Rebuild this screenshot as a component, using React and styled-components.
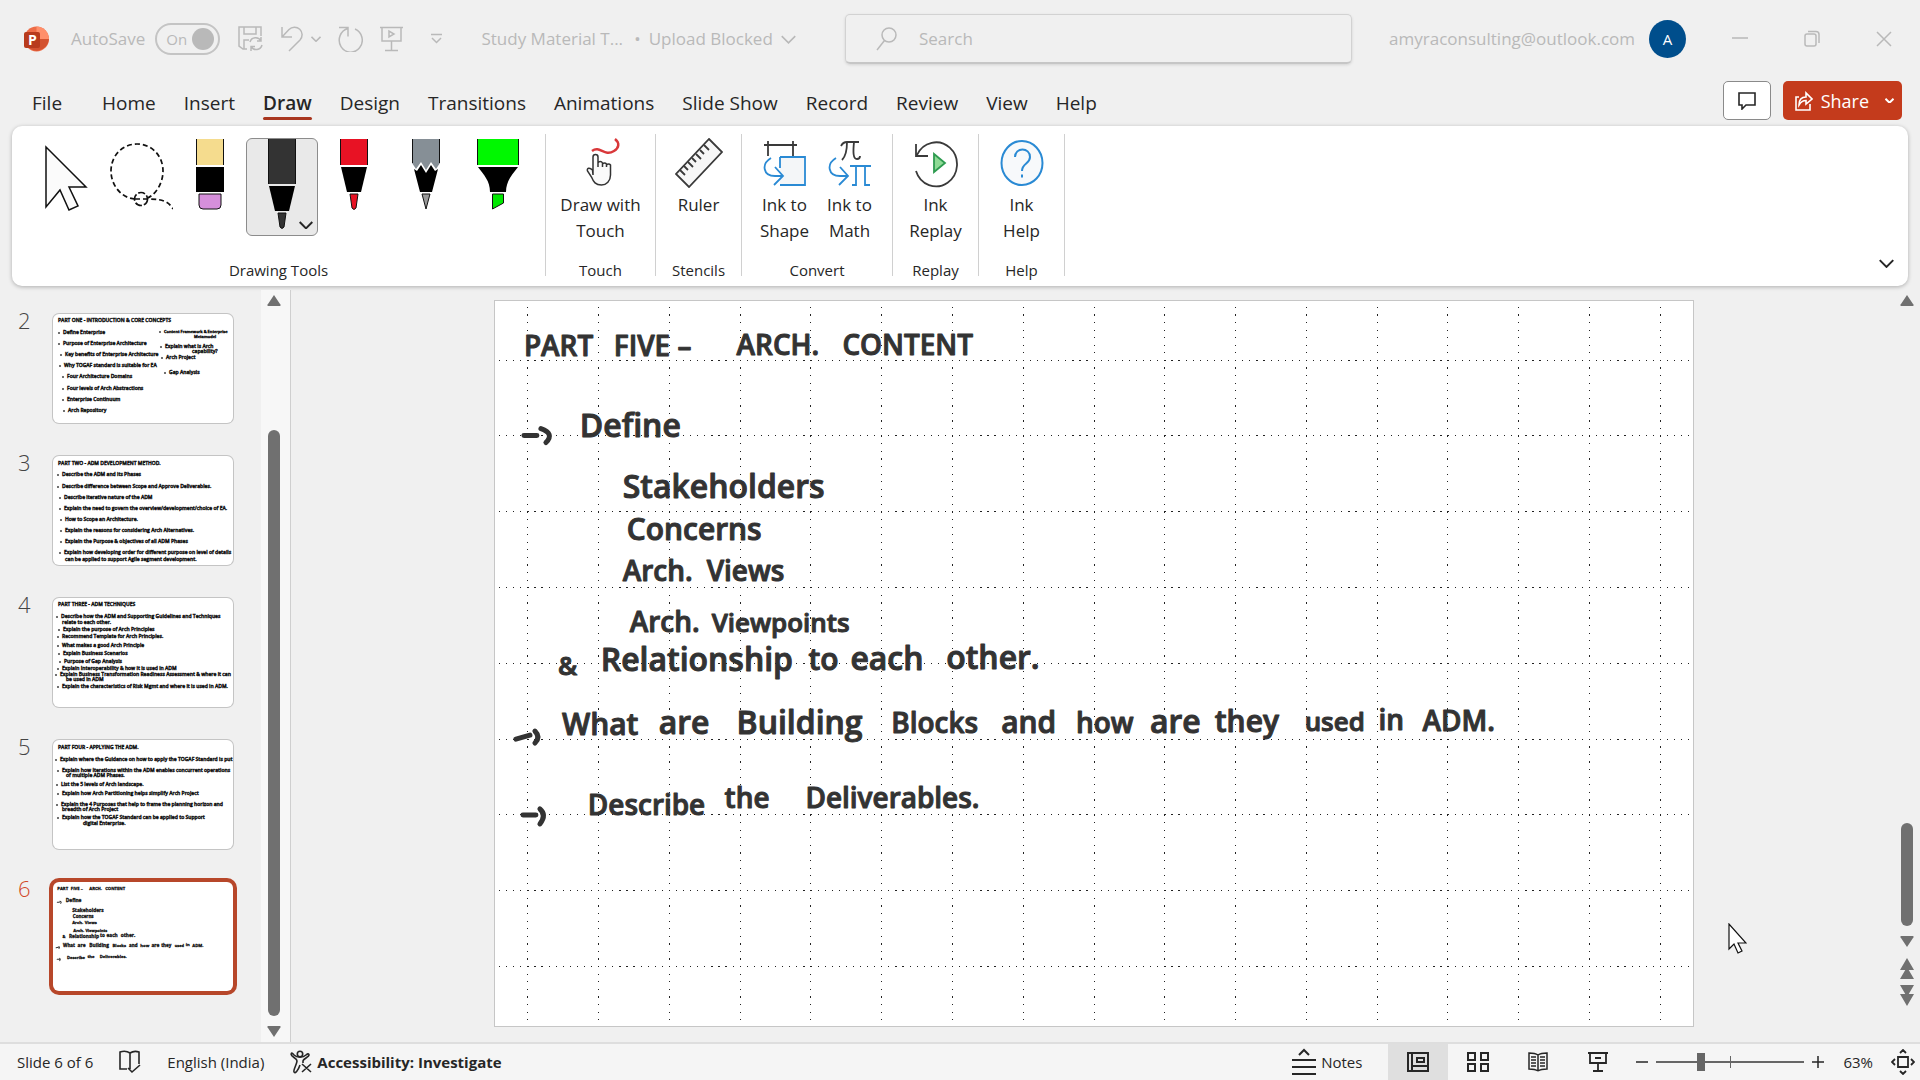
import React from "react";
import styled, { createGlobalStyle } from "styled-components";

const Global = createGlobalStyle`
  *, *::before, *::after { box-sizing: border-box; }
  body {
    margin: 0;
    background: #f0f0f0;
    color: #262626;
    font-family: "Open Sans", "Noto Sans", sans-serif;
    font-size: 17px;
    line-height: 26px;
  }
  button { font: inherit; color: inherit; background: none; border: 0; padding: 0; }
  svg { display: block; flex: none; }
`;

/* ---------- window frame ---------- */

const Window = styled.div`
  display: flex;
  flex-direction: column;
  height: 100vh;
  overflow: hidden;
`;

const TitleBar = styled.header`
  display: grid;
  grid-template-columns: 845fr 507fr 568fr;
  align-items: center;
  height: 78px;
  color: #b9b9b9;
  white-space: nowrap;
`;

const TitleLeft = styled.div`
  display: flex;
  align-items: center;
  padding-left: 24px;
`;

const TitleRight = styled.div`
  display: flex;
  align-items: center;
  justify-content: flex-end;
  padding-right: 28px;
`;

const AutoSave = styled.label`
  display: flex;
  align-items: center;
  gap: 10px;
  margin: 0 18px 0 22px;
`;

const HiddenCheck = styled.input`
  position: absolute;
  opacity: 0;
  pointer-events: none;
`;

const Switch = styled.span`
  display: flex;
  align-items: center;
  justify-content: space-between;
  width: 65px;
  height: 32px;
  padding: 0 4px 0 9px;
  border: 2px solid #c4c4c4;
  border-radius: 16px;
  font-size: 15px;
`;

const Knob = styled.span`
  width: 22px;
  height: 22px;
  border-radius: 50%;
  background: #b9b9b9;
`;

const QuickTools = styled.div`
  display: flex;
  align-items: center;
  gap: 17px;
`;

const UndoGroup = styled.div`
  display: flex;
  align-items: center;
  gap: 8px;
`;

const MoreButton = styled.button`
  margin-left: 28px;
`;

const DocName = styled.button`
  display: flex;
  align-items: center;
  gap: 8px;
  margin-left: 36px;
`;

const DocTitle = styled.span`
  width: 148px;
`;

const SearchBox = styled.label`
  display: flex;
  align-items: center;
  gap: 20px;
  height: 50px;
  padding-left: 30px;
  border: 1px solid #d2d2d2;
  border-bottom: 2px solid #c6c6c6;
  border-radius: 5px;
  box-shadow: 0 1px 3px rgba(0, 0, 0, 0.12);
`;

const SearchInput = styled.input`
  flex: 1;
  min-width: 0;
  border: 0;
  outline: 0;
  background: none;
  font: inherit;
  &::placeholder { color: #b9b9b9; opacity: 1; }
`;

const Avatar = styled.span`
  display: grid;
  place-items: center;
  width: 37px;
  height: 38px;
  margin: 0 46px 0 14px;
  border-radius: 50%;
  background: #004e8c;
  color: #fff;
  font-size: 15px;
`;

const WindowButtons = styled.div`
  display: flex;
  gap: 56px;
`;

/* ---------- tab strip ---------- */

const TabBar = styled.nav`
  display: flex;
  align-items: flex-start;
  justify-content: space-between;
  height: 48px;
  padding: 3px 18px 0;
`;

const TabList = styled.div`
  display: flex;
  font-size: 19px;
`;

const Tab = styled.button`
  margin-right: ${(p) => (p.$first ? "12px" : "0")};
  padding: 8px 14px 0;
  font-weight: ${(p) => (p.$active ? 600 : 400)};
  line-height: 28px;
  white-space: nowrap;
  &::after {
    content: "";
    display: block;
    height: 3px;
    border-radius: 2px;
    background: ${(p) => (p.$active ? "#a8361f" : "transparent")};
  }
`;

const TabActions = styled.div`
  display: flex;
  gap: 12px;
`;

const CommentButton = styled.button`
  display: grid;
  place-items: center;
  width: 48px;
  height: 39px;
  border: 1px solid #8a8a8a;
  border-radius: 5px;
  background: #fff;
`;

const ShareButton = styled.button`
  display: flex;
  align-items: center;
  gap: 8px;
  height: 39px;
  padding: 0 8px 0 12px;
  border-radius: 5px;
  background: #c43b1c;
  color: #fff;
  font-size: 18px;
`;

const ShareText = styled.span`
  margin-right: 8px;
`;

/* ---------- ribbon ---------- */

const Ribbon = styled.section`
  display: flex;
  margin: 0 12px;
  height: 160px;
  padding: 8px 0 10px;
  border-radius: 10px;
  background: #fff;
  box-shadow: 0 1px 4px rgba(0, 0, 0, 0.28);
`;

const Group = styled.div`
  display: flex;
  flex-direction: column;
  align-items: center;
  justify-content: space-between;
  width: ${(p) => p.$width}px;
  padding: 4px 0 1px;
  border-right: 1px solid #d0d0d0;
`;

const GroupItems = styled.div`
  display: flex;
  padding-left: ${(p) => (p.$inset ? "6px" : "0")};
`;

const GroupLabel = styled.span`
  font-size: 15px;
  line-height: 10px;
`;

const RibbonButton = styled.button`
  display: flex;
  flex-direction: column;
  align-items: center;
  width: ${(p) => p.$width}px;
  line-height: 26px;
  svg { margin-bottom: 4px; }
`;

const Tool = styled.button`
  position: relative;
  display: flex;
  justify-content: center;
  width: 72px;
  height: 98px;
  border-radius: 6px;
  border: 1px solid ${(p) => (p.$active ? "#8c8c8c" : "transparent")};
  background: ${(p) => (p.$active ? "#e9e9e9" : "transparent")};
`;

const ToolArrow = styled.span`
  position: absolute;
  right: 4px;
  bottom: 6px;
`;

const Collapse = styled.button`
  margin-left: auto;
  align-self: flex-end;
  padding: 0 14px 8px;
`;

/* ---------- workspace ---------- */

const Workspace = styled.main`
  flex: 1;
  display: grid;
  grid-template-columns: 261px 30px 1fr 26px;
  min-height: 0;
  padding-top: 4px;
  border-bottom: 2px solid #dedede;
`;

const ThumbList = styled.div`
  display: flex;
  flex-direction: column;
  gap: 33px;
  padding: 24px 0 0 18px;
`;

const ThumbRow = styled.button`
  display: flex;
  align-items: flex-start;
  text-align: left;
  color: ${(p) => (p.$active ? "#d24726" : "#444")};
`;

const ThumbNumber = styled.span`
  width: 35px;
  font-size: 22px;
  font-weight: 300;
  line-height: 12px;
`;

const ThumbFrame = styled.span`
  width: 180px;
  height: 109px;
  overflow: hidden;
  border-radius: 6px;
  background: #fff;
  box-shadow: 0 0 0 ${(p) => (p.$active ? "4px #b7472a" : "1px #c4c4c4")};
`;

const ScrollTrack = styled.div`
  display: flex;
  flex-direction: column;
  align-items: center;
  padding: ${(p) => (p.$divided ? "5px 3px 5px 0" : "5px 0 8px")};
  background: ${(p) => (p.$divided ? "#f7f7f7" : "transparent")};
  border-right: ${(p) => (p.$divided ? "1px solid #cfcfcf" : "0")};
`;

const ScrollThumb = styled.div`
  width: 12px;
  flex: 0 0 ${(p) => p.$size}%;
  margin: auto 0 10px;
  border-radius: 6px;
  background: #707070;
`;

const PageJumps = styled.div`
  display: flex;
  flex-direction: column;
  gap: 6px;
  padding: 11px 0 28px;
`;

const Canvas = styled.div`
  position: relative;
  padding: 10px 0 0 3px;
`;

const Slide = styled.div`
  width: 75%;
  margin: 0 auto;
  border: 1px solid #c6c6c6;
  background: #fff;
  svg { width: 100%; height: auto; }
`;

const Pointer = styled.div`
  position: absolute;
  left: 1437px;
  top: 633px;
`;

/* ---------- status bar ---------- */

const StatusBar = styled.footer`
  display: flex;
  align-items: center;
  justify-content: space-between;
  height: 36px;
  padding: 0 5px 0 17px;
  background: #f5f5f5;
  font-size: 15px;
  white-space: nowrap;
`;

const StatusSide = styled.div`
  display: flex;
  align-items: center;
  gap: ${(p) => p.$gap}px;
  height: 100%;
`;

const StatusButton = styled.button`
  display: flex;
  align-items: center;
  gap: 5px;
  font-weight: ${(p) => (p.$bold ? 700 : 400)};
`;

const NotesButton = styled(StatusButton)`
  margin-right: 26px;
`;

const ViewButton = styled.button`
  display: grid;
  place-items: center;
  width: 60px;
  height: 36px;
  background: ${(p) => (p.$active ? "#dfdfdf" : "transparent")};
`;

const ZoomGroup = styled.div`
  display: flex;
  align-items: center;
  gap: 8px;
  padding: 0 19px 0 8px;
`;

const ZoomRange = styled.input`
  appearance: none;
  width: 148px;
  height: 26px;
  margin: 0;
  background:
    linear-gradient(#666, #666) 50% 50% / 1px 12px no-repeat,
    linear-gradient(#666, #666) 0 50% / 100% 2px no-repeat;
  &::-webkit-slider-thumb {
    appearance: none;
    width: 8px;
    height: 18px;
    background: #666;
  }
`;

/* ---------- icons ---------- */

const Svg = ({ w, h, vb, children, stroke = "currentColor", sw = 1.5 }) => (
  <svg width={w} height={h} viewBox={vb || `0 0 ${w} ${h}`} fill="none" stroke={stroke} strokeWidth={sw} aria-hidden="true">
    {children}
  </svg>
);

const Chevron = ({ w = 12, sw = 1.6 }) => (
  <Svg w={w} h={w * 0.6} vb="0 0 20 12" sw={(sw * 20) / w}><path d="M1 1.5 10 10.5 19 1.5" /></Svg>
);

const Logo = () => (
  <svg width="25" height="26" viewBox="0 0 25 26" aria-hidden="true">
    <circle cx="12.5" cy="13" r="12.5" fill="#ed6c47" />
    <path d="M12.5.5A12.5 12.5 0 0 1 25 13H12.5z" fill="#ff8f6b" />
    <path d="M0 13h25a12.5 12.5 0 0 1-24 4z" fill="#d35230" />
    <rect y="6" width="16" height="16" rx="2" fill="#b83b1d" />
    <text x="4" y="19" fill="#fff" fontSize="14" fontWeight="700">P</text>
  </svg>
);

const SaveIcon = () => (
  <Svg w={25} h={26}>
    <path d="M9 23H5L1 20V1h22v9M6 1v7h12V1M6 23v-9h5" />
    <path d="M12 16a6 6 0 0 1 11-1M23 11v4h-4M24 19a6 6 0 0 1-11 1.5M13 25v-4.5h4" />
  </Svg>
);
const UndoIcon = () => (
  <Svg w={23} h={26}><path d="M2 1v10h10M2 11 9 3.5a7.5 7.5 0 0 1 11 10.5L9 25" /></Svg>
);
const RedoIcon = () => (
  <Svg w={25} h={26}><path d="M1 1.5h9v9M10 2.5A11.5 12 0 1 0 17 3" /></Svg>
);
const PresentIcon = () => (
  <Svg w={23} h={26}><path d="M0 1.5h23M2 1.5V15h19V1.5M11.5 15v9M5 24.5h13" /><path d="M9 5v6l5-3z" /></Svg>
);
const MoreIcon = () => (
  <Svg w={11} h={12}><path d="M0 1.5h11M1 5l4.5 4.5L10 5" /></Svg>
);
const SearchIcon = () => (
  <Svg w={21} h={24}><circle cx="13" cy="8" r="7" /><path d="M8.5 13.5 1 23" /></Svg>
);
const MinIcon = () => <Svg w={16} h={18}><path d="M0 8h16" /></Svg>;
const RestoreIcon = () => (
  <Svg w={16} h={18}><rect x="1" y="4" width="11" height="12" rx="2" /><path d="M4 1.5h8a3 3 0 0 1 3 3V13" /></Svg>
);
const CloseIcon = () => <Svg w={16} h={18}><path d="M1 2l14 14M15 2 1 16" /></Svg>;
const CommentIcon = () => (
  <Svg w={18} h={18} sw={1.6}><path d="M1 1h16v12H8l-4 4v-4H1z" /></Svg>
);
const ShareIcon = () => (
  <Svg w={18} h={20} sw={1.6}><path d="M4 6H1v13h14v-6" /><path d="M4 14c0-6 3-8 7-8V2l6 6-6 5V9.5c-3 0-5 1-7 4.5z" /></Svg>
);

const SelectIcon = () => (
  <svg width="70" height="80" viewBox="0 0 70 80" aria-hidden="true">
    <path d="M15 8v60l14-17 9 20 9-4-9-19h17z" fill="#fbfbfb" stroke="#111" strokeWidth="1.5" />
  </svg>
);
const LassoIcon = () => (
  <Svg w={70} h={80} stroke="#111" sw={1.7}>
    <path d="M32 60C18 59 8 46 8 32 8 17 19 5 34 5s26 12 26 27c0 13-8 25-18 28" strokeDasharray="5 3" />
    <path d="M32 60h14c14 0 20 3 24 10" strokeDasharray="5 3" />
    <circle cx="38" cy="60" r="6.5" strokeDasharray="7 2" />
  </Svg>
);
const EraserIcon = () => (
  <svg width="28" height="72" viewBox="0 0 28 72" aria-hidden="true">
    <rect width="28" height="26" fill="#f5dc8e" />
    <path d="M.5 0v26M27.5 0v26" stroke="#111" />
    <rect y="28" width="28" height="25" />
    <path d="M3 55h22v11a4 4 0 0 1-4 4H7a4 4 0 0 1-4-4z" fill="#d68fdb" stroke="#111" />
  </svg>
);
const PenIcon = ({ color, long }) => {
  const b = long ? 45 : 26;
  return (
    <svg width="28" height={b + 46} viewBox={`0 0 28 ${b + 46}`} aria-hidden="true">
      <rect width="28" height={b} fill={color} />
      <path d={`M.5 0v${b}M27.5 0v${b}`} stroke="#111" />
      <path d={`M1 ${b + 2}h26l-6 25H7z`} />
      <path d={`M10 ${b + 29}h8l-2 14q-2 3-4 0z`} fill={color} stroke="#111" />
    </svg>
  );
};
const PencilIcon = () => (
  <svg width="28" height="72" viewBox="0 0 28 72" aria-hidden="true">
    <path d="M0 0h28v24l-4 6-5-7-5 8-5-8-5 7-4-6z" fill="#868f96" />
    <path d="M.5 0v24M27.5 0v24" stroke="#111" />
    <path d="M2 30l3 2 4-6 5 8 5-8 4 6 3-2-6 23H8z" />
    <path d="M10 55h8l-4 15z" fill="#999" stroke="#111" />
  </svg>
);
const HighlighterIcon = () => (
  <svg width="42" height="72" viewBox="0 0 42 72" aria-hidden="true">
    <rect width="42" height="26" fill="#00f800" />
    <path d="M.5 0v26M41.5 0v26" stroke="#111" />
    <path d="M1 28h40c-6 8-12 14-12 25H13C13 42 7 36 1 28z" />
    <path d="M15.5 55h11v9l-11 6z" fill="#00e800" stroke="#111" />
  </svg>
);

const TouchIcon = () => (
  <Svg w={40} h={50}>
    <path d="M11 13c8-6 12 6 22 0 5-3 6-8 1-12" stroke="#d9383a" strokeWidth="2.5" />
    <path d="M12 37V19a2.500 2.500 0 0 1 5 0v10-4a2.500 2.500 0 0 1 4.500 0v4-3a2.500 2.500 0 0 1 4 0v3-2a2.500 2.500 0 0 1 4 0v10c0 6-4 10-9 10-6 0-8-3-10-8l-4-6c-1-3 2-4 5-1z" fill="#fafafa" stroke="#333" />
  </Svg>
);
const RulerIcon = () => (
  <Svg w={48} h={50} stroke="#3a3a3a" sw={1.8}>
    <path d="M34 1 47 14 14 49 1 36z" fill="#f7f7f7" />
    <path d="M5 32l5 5M9 28l4 4M13 24l5 5M17 20l4 4M21 16l5 5M25 12l4 4M29 7l5 5" />
  </Svg>
);
const ShapeIcon = () => (
  <Svg w={44} h={50} sw={1.8}>
    <path d="M1 7h33M5 3v15M30 3v15" stroke="#3a3a3a" />
    <path d="M17 19h25v28H17" fill="#f4f6f8" stroke="#2a8ad4" />
    <path d="M17 30v-11M8 20C-2 26 0 38 12 38h7M12 29l8 9-9 9" stroke="#2a8ad4" />
  </Svg>
);
const MathIcon = () => (
  <Svg w={44} h={50} sw={1.8}>
    <path d="M13 8c2-4 4-4 6-4h12M19 4c0 8-1 14-5 18M26 4c-1 10-1 17 3 17 2 0 3-1 3-3" stroke="#3a3a3a" />
    <path d="M8 20C-2 26 0 38 12 38h7M12 29l8 9-9 9" stroke="#2a8ad4" />
    <path d="M22 28h21M28 28v19h-4M37 28v19h5" stroke="#2a8ad4" />
  </Svg>
);
const ReplayIcon = () => (
  <Svg w={44} h={50} sw={1.8}>
    <path d="M2 6v12h12M3 17A21 22 0 1 1 2 33" stroke="#3a3a3a" />
    <path d="M20 16v18l11-9z" fill="#8fdb96" stroke="#2e9b50" />
  </Svg>
);
const HelpIcon = () => (
  <Svg w={44} h={50} stroke="#2a8ad4" sw={2}>
    <ellipse cx="22" cy="25" rx="20.5" ry="22" fill="#f7f9fb" />
    <path d="M15 19c0-10 15-10 15 0 0 7-8 6-8 14M22 36.5v3" />
  </Svg>
);

const ArrowUp = () => <svg width="14" height="11" viewBox="0 0 14 11" aria-hidden="true"><path d="M7 0l6 9a1 1 0 0 1-1 2H2a1 1 0 0 1-1-2z" fill="#707070" /></svg>;
const ArrowDown = () => <svg width="14" height="11" viewBox="0 0 14 11" aria-hidden="true"><path d="M7 11l6-9a1 1 0 0 0-1-2H2a1 1 0 0 0-1 2z" fill="#707070" /></svg>;
const DoubleUp = () => <svg width="14" height="21" viewBox="0 0 14 21" aria-hidden="true"><path d="M7 0l7 12H0zM7 9l7 12H0z" fill="#707070" /></svg>;
const DoubleDown = () => <svg width="14" height="21" viewBox="0 0 14 21" aria-hidden="true"><path d="M7 21l7-12H0zM7 12l7-12H0z" fill="#707070" /></svg>;

const SpellIcon = () => (
  <Svg w={22} h={24} sw={1.6}><path d="M11 19V3C8 1 4 1 1 2v17h7M11 3c3-2 6-2 9-1v12M9 18l4 4 8-7" /></Svg>
);
const AccessIcon = () => (
  <Svg w={22} h={24} sw={1.6}>
    <circle cx="10" cy="4" r="2.7" />
    <path d="M1 4c1-2 2 0 3 1 3 3 9 3 12 0 1-1 3-2 3 0s-6 4-6 6v2M1 4c0 3 6 4 6 7s-4 9-3 11 4-1 6-7M12 14l9 8M21 14l-9 8" />
  </Svg>
);
const NotesIcon = () => (
  <Svg w={24} h={28} sw={2}><path d="M7 7l5-5 5 5M0 12h24M0 19h24M0 26h24" /></Svg>
);
const NormalIcon = () => (
  <Svg w={22} h={20} sw={2}><path d="M1 1h20v18H1zM5 1v18M5 14h16M10 6h7v4h-7z" /></Svg>
);
const SorterIcon = () => (
  <Svg w={22} h={20} sw={2}><path d="M1 1h7v7H1zM14 1h7v7h-7zM1 12h7v7H1zM14 12h7v7h-7z" /></Svg>
);
const ReadingIcon = () => (
  <Svg w={22} h={20}><path d="M11 3v16M11 3C8 1 4 1 2 1v16c3 0 6 0 9 2M11 3c3-2 7-2 9-2v16c-3 0-6 0-9 2M4 5h5M4 8h5M4 11h5M4 14h5M13 5h5M13 8h5M13 11h5M13 14h5" /></Svg>
);
const ShowIcon = () => (
  <Svg w={22} h={20} sw={1.8}><path d="M1 1h20M3 1v10h16V1M8 6h6M11 11v8M6 19h10" /></Svg>
);
const FitIcon = () => (
  <Svg w={24} h={26} sw={1.8}><path d="M7 8h10v10H7zM9 4l3-3 3 3M9 22l3 3 3-3M4 10l-3 3 3 3M20 10l3 3-3 3" /></Svg>
);
const MinusIcon = () => <Svg w={12} h={12}><path d="M0 6h12" /></Svg>;
const PlusIcon = () => <Svg w={12} h={12}><path d="M0 6h12M6 0v12" /></Svg>;

/* ---------- slide contents ---------- */

const Handwriting = styled.g`
  font-family: "Open Sans", "Noto Sans", sans-serif;
  font-weight: ${(p) => (p.$heavy ? 700 : 600)};
  fill: ${(p) => (p.$heavy ? "#111" : "#333")};
  stroke: ${(p) => (p.$heavy ? "#111" : "#333")};
  stroke-width: ${(p) => (p.$heavy ? 2 : 1)}px;
  stroke-linejoin: round;
`;

/* x, baseline, size, word */
const words = [
  [30, 54, 28, "PART"], [120, 54, 28, "FIVE –"], [243, 53, 28, "ARCH."], [349, 53, 28, "CONTENT"],
  [86, 135, 32, "Define"],
  [129, 196, 32, "Stakeholders"],
  [133, 239, 30, "Concerns"],
  [129, 280, 28, "Arch."], [213, 280, 28, "Views"],
  [136, 331, 28, "Arch."], [218, 331, 26, "Viewpoints"],
  [64, 374, 26, "&"], [107, 370, 32, "Relationship"], [315, 369, 30, "to"], [357, 369, 32, "each"], [453, 368, 32, "other."],
  [68, 434, 30, "What"], [165, 433, 32, "are"], [243, 433, 32, "Building"], [398, 432, 28, "Blocks"], [508, 432, 30, "and"],
  [583, 432, 28, "how"], [657, 432, 32, "are"], [722, 431, 30, "they"], [812, 430, 26, "used"], [886, 429, 28, "in"], [930, 430, 28, "ADM."],
  [94, 514, 28, "Describe"], [231, 507, 28, "the"], [312, 507, 28, "Deliverables."],
];

const verticals = Array.from({ length: 17 }, (_, i) => 601 + (i - 8) * 70.9);
const horizontals = Array.from({ length: 9 }, (_, i) => 362 + (i - 4) * 75.9);

const PartFive = ({ grid }) => (
  <svg width="180" height="109" viewBox="1 1 1200 723">
    {grid && (
      <g stroke="#222" strokeWidth="1" shapeRendering="crispEdges">
        {verticals.map((x) => <path key={x} d={`M${x} 5V724`} strokeDasharray="1.2 6.39" />)}
        {horizontals.map((y) => <path key={y} d={`M5 ${y}H1200`} strokeDasharray="1.2 5.89" />)}
      </g>
    )}
    <Handwriting $heavy={!grid}>
      {words.map(([x, y, size, text]) => <text key={`${x}-${y}`} x={x} y={y} fontSize={size}>{text}</text>)}
    </Handwriting>
    <g fill="none" stroke="#333" strokeWidth={grid ? 5 : 7} strokeLinecap="round">
      <path d="M30 134H43M47 127q14 5 5 14" />
      <path d="M22 438l14-4M41 430q6 6 0 12" />
      <path d="M29 514h13M46 508q7 6 0 15" />
    </g>
  </svg>
);

/* x, baseline, text, bulleted, small */
const notes = {
  2: [
    [5, 8, "PART ONE - INTRODUCTION & CORE CONCEPTS"],
    [10, 20, "Define Enterprise", true], [10, 31, "Purpose of Enterprise Architecture", true],
    [12, 42, "Key benefits of Enterprise Architecture", true], [11, 53, "Why TOGAF standard is suitable for EA", true],
    [14, 64, "Four Architecture Domains", true], [14, 76, "Four levels of Arch Abstractions", true],
    [14, 87, "Enterprise Continuum", true], [15, 98, "Arch Repository", true],
    [111, 19, "Content Framework & Enterprise", true, true], [141, 24, "Metamodel", false, true],
    [112, 34, "Explain what is Arch", true], [139, 39, "capability?"],
    [113, 45, "Arch Project", true], [116, 60, "Gap Analysis", true],
  ],
  3: [
    [5, 9, "PART TWO - ADM DEVELOPMENT METHOD."],
    [9, 20, "Describe the ADM and its Phases", true], [9, 32, "Describe difference between Scope and Approve Deliverables.", true],
    [11, 43, "Describe iterative nature of the ADM", true], [11, 54, "Explain the need to govern the overview/development/choice of EA.", true],
    [12, 65, "How to Scope an Architecture.", true], [12, 76, "Explain the reasons for considering Arch Alternatives.", true],
    [12, 87, "Explain the Purpose & objectives of all ADM Phases", true],
    [11, 98, "Explain how developing order for different purpose on level of details", true],
    [12, 105, "can be applied to support Agile segment development."],
  ],
  4: [
    [5, 8, "PART THREE - ADM TECHNIQUES"],
    [8, 20, "Describe how the ADM and Supporting Guidelines and Techniques", true], [9, 26, "relate to each other."],
    [10, 33, "Explain the purpose of Arch Principles", true], [9, 40, "Recommend Template for Arch Principles.", true],
    [9, 49, "What makes a good Arch Principle", true], [10, 57, "Explain Business Scenarios", true],
    [11, 65, "Purpose of Gap Analysis", true], [9, 72, "Explain Interoperability & how it is used in ADM", true],
    [7, 78, "Explain Business Transformation Readiness Assessment & where it can", true], [13, 83, "be used in ADM"],
    [9, 90, "Explain the characteristics of Risk Mgmt and where it is used in ADM.", true],
  ],
  5: [
    [5, 9, "PART FOUR - APPLYING THE ADM."],
    [7, 21, "Explain where the Guidance on how to apply the TOGAF Standard is put", true],
    [9, 32, "Explain how Iterations within the ADM enables concurrent operations", true], [13, 37, "of multiple ADM Phases."],
    [8, 46, "List the 5 levels of Arch landscape.", true], [9, 55, "Explain how Arch Partitioning helps simplify Arch Project", true],
    [8, 66, "Explain the 4 Purposes that help to frame the planning horizon and", true], [9, 71, "breadth of Arch Project"],
    [9, 79, "Explain how the TOGAF Standard can be applied to Support", true], [30, 85, "digital Enterprise."],
  ],
};

const ThumbInk = styled.g`
  font-family: "Open Sans", "Noto Sans", sans-serif;
  font-weight: 600;
  fill: #111;
  stroke: #111;
  stroke-width: 0.4px;
`;

const NotesSlide = ({ lines }) => (
  <svg width="180" height="109" viewBox="0 0 180 109">
    <ThumbInk>
      {lines.map(([x, y, text, bulleted, small]) => (
        <React.Fragment key={text}>
          {bulleted && <circle cx={x - 4} cy={y - 1} r="0.7" />}
          <text x={x} y={y} fontSize={small ? 4 : 5}>{text}</text>
        </React.Fragment>
      ))}
    </ThumbInk>
  </svg>
);

/* ---------- page ---------- */

const tabs = ["File", "Home", "Insert", "Draw", "Design", "Transitions", "Animations", "Slide Show", "Record", "Review", "View", "Help"];

const groups = [
  { label: "Touch", width: 110, items: [[90, TouchIcon, "Draw with", "Touch"]] },
  { label: "Stencils", width: 86, items: [[80, RulerIcon, "Ruler"]] },
  { label: "Convert", width: 151, items: [[65, ShapeIcon, "Ink to", "Shape"], [65, MathIcon, "Ink to", "Math"]] },
  { label: "Replay", width: 86, items: [[80, ReplayIcon, "Ink", "Replay"]] },
  { label: "Help", width: 86, items: [[80, HelpIcon, "Ink", "Help"]] },
];

export default function App() {
  return (
    <Window>
      <Global />
      <TitleBar>
        <TitleLeft>
          <Logo />
          <AutoSave>
            AutoSave
            <HiddenCheck type="checkbox" defaultChecked />
            <Switch>On<Knob /></Switch>
          </AutoSave>
          <QuickTools>
            <button aria-label="Save"><SaveIcon /></button>
            <UndoGroup>
              <button aria-label="Undo"><UndoIcon /></button>
              <button aria-label="Undo history"><Chevron w={10} /></button>
            </UndoGroup>
            <button aria-label="Redo"><RedoIcon /></button>
            <button aria-label="Present"><PresentIcon /></button>
          </QuickTools>
          <MoreButton aria-label="More commands"><MoreIcon /></MoreButton>
          <DocName>
            <DocTitle>Study Material T...</DocTitle>
            <span>•</span>
            <span>Upload Blocked</span>
            <Chevron w={15} />
          </DocName>
        </TitleLeft>
        <SearchBox>
          <SearchIcon />
          <SearchInput placeholder="Search" aria-label="Search" />
        </SearchBox>
        <TitleRight>
          <span>amyraconsulting@outlook.com</span>
          <Avatar>A</Avatar>
          <WindowButtons>
            <button aria-label="Minimize"><MinIcon /></button>
            <button aria-label="Restore"><RestoreIcon /></button>
            <button aria-label="Close"><CloseIcon /></button>
          </WindowButtons>
        </TitleRight>
      </TitleBar>

      <TabBar>
        <TabList>
          {tabs.map((t) => <Tab key={t} $first={t === "File"} $active={t === "Draw"}>{t}</Tab>)}
        </TabList>
        <TabActions>
          <CommentButton aria-label="Comments"><CommentIcon /></CommentButton>
          <ShareButton><ShareIcon /><ShareText>Share</ShareText><Chevron w={9} sw={2} /></ShareButton>
        </TabActions>
      </TabBar>

      <Ribbon>
        <Group $width={534}>
          <GroupItems $inset>
            <Tool aria-label="Select"><SelectIcon /></Tool>
            <Tool aria-label="Lasso"><LassoIcon /></Tool>
            <Tool aria-label="Eraser"><EraserIcon /></Tool>
            <Tool aria-label="Black pen" $active>
              <PenIcon color="#333" long />
              <ToolArrow><Chevron w={14} sw={2} /></ToolArrow>
            </Tool>
            <Tool aria-label="Red pen"><PenIcon color="#e81224" /></Tool>
            <Tool aria-label="Pencil"><PencilIcon /></Tool>
            <Tool aria-label="Highlighter"><HighlighterIcon /></Tool>
          </GroupItems>
          <GroupLabel>Drawing Tools</GroupLabel>
        </Group>
        {groups.map((g) => (
          <Group key={g.label} $width={g.width}>
            <GroupItems>
              {g.items.map(([w, Icon, a, b]) => (
                <RibbonButton key={b || a} $width={w}>
                  <Icon />
                  <span>{a}</span>
                  {b && <span>{b}</span>}
                </RibbonButton>
              ))}
            </GroupItems>
            <GroupLabel>{g.label}</GroupLabel>
          </Group>
        ))}
        <Collapse aria-label="Ribbon options"><Chevron w={15} sw={2} /></Collapse>
      </Ribbon>

      <Workspace>
        <ThumbList>
          {[2, 3, 4, 5, 6].map((n) => (
            <ThumbRow key={n} $active={n === 6}>
              <ThumbNumber>{n}</ThumbNumber>
              <ThumbFrame $active={n === 6}>
                {n === 6 ? <PartFive /> : <NotesSlide lines={notes[n]} />}
              </ThumbFrame>
            </ThumbRow>
          ))}
        </ThumbList>
        <ScrollTrack $divided>
          <ArrowUp />
          <ScrollThumb $size={79} />
          <ArrowDown />
        </ScrollTrack>
        <Canvas>
          <Slide><PartFive grid /></Slide>
          <Pointer>
            <svg width="19" height="31" viewBox="0 0 19 31" aria-hidden="true">
              <path d="M1 1v25l5-5 4 9 4-2-4-8h8z" fill="#fff" stroke="#111" strokeWidth="1.2" />
            </svg>
          </Pointer>
        </Canvas>
        <ScrollTrack>
          <ArrowUp />
          <ScrollThumb $size={14} />
          <ArrowDown />
          <PageJumps><DoubleUp /><DoubleDown /></PageJumps>
        </ScrollTrack>
      </Workspace>

      <StatusBar>
        <StatusSide $gap={26}>
          <span>Slide 6 of 6</span>
          <button aria-label="Spelling"><SpellIcon /></button>
          <StatusButton>English (India)</StatusButton>
          <StatusButton $bold><AccessIcon />Accessibility: Investigate</StatusButton>
        </StatusSide>
        <StatusSide $gap={0}>
          <NotesButton><NotesIcon />Notes</NotesButton>
          <ViewButton $active aria-label="Normal view"><NormalIcon /></ViewButton>
          <ViewButton aria-label="Slide sorter"><SorterIcon /></ViewButton>
          <ViewButton aria-label="Reading view"><ReadingIcon /></ViewButton>
          <ViewButton aria-label="Slide show"><ShowIcon /></ViewButton>
          <ZoomGroup>
            <button aria-label="Zoom out"><MinusIcon /></button>
            <ZoomRange type="range" min="0" max="100" defaultValue="29" aria-label="Zoom" />
            <button aria-label="Zoom in"><PlusIcon /></button>
          </ZoomGroup>
          <StatusSide $gap={18}>
            <StatusButton>63%</StatusButton>
            <button aria-label="Fit to window"><FitIcon /></button>
          </StatusSide>
        </StatusSide>
      </StatusBar>
    </Window>
  );
}
